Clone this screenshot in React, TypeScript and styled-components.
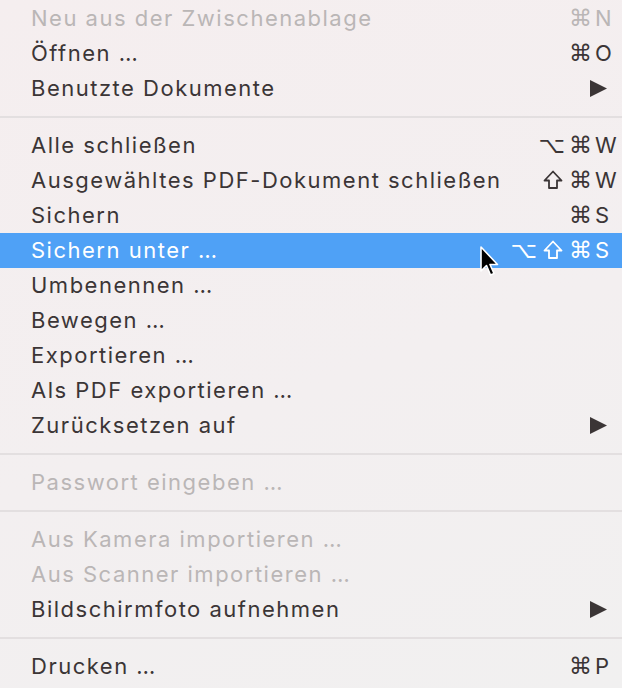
import React from "react";
import styled, { createGlobalStyle } from "styled-components";

const GlobalStyle = createGlobalStyle`
  html, body {
    margin: 0;
    padding: 0;
    background: #f3eeef;
  }
  * {
    box-sizing: border-box;
  }
`;

const Menu = styled.div`
  position: relative;
  width: 622px;
  height: 688px;
  overflow: hidden;
  padding-top: 0.5px;
  background: linear-gradient(160deg, #f5eeef 0%, #f3eff0 55%, #f1f0f0 100%);
  font-family: Inter, "Liberation Sans", sans-serif;
  font-size: 22px;
  letter-spacing: 1.5px;
  -webkit-font-smoothing: antialiased;
`;

const Row = styled.div<{ $disabled?: boolean; $active?: boolean }>`
  display: flex;
  align-items: center;
  height: 35px;
  padding-left: 31px;
  color: ${(p) => (p.$active ? "#ffffff" : p.$disabled ? "#bab6b6" : "#3b3536")};
  background: ${(p) => (p.$active ? "#4fa1f6" : "transparent")};
`;

const Label = styled.span`
  flex: 1;
  white-space: nowrap;
`;

const Shortcut = styled.span`
  display: flex;
  align-items: center;
`;

const Mods = styled.span`
  display: flex;
  align-items: center;
  gap: 4px;
  font-family: "DejaVu Sans", sans-serif;
  font-size: 23px;
  letter-spacing: 0;
`;

const Key = styled.span`
  width: 30px;
  padding-left: 3px;
  letter-spacing: 0;
`;

const ShiftIcon = styled.svg`
  display: block;
  margin: 0 2px;
`;

const ArrowBox = styled.span`
  display: flex;
  align-items: center;
  width: 32px;
`;

const Separator = styled.div`
  height: 22px;
  display: flex;
  align-items: center;
  &::after {
    content: "";
    display: block;
    width: 100%;
    height: 2px;
    background: #e3dfe0;
  }
`;

const Pointer = styled.svg`
  position: absolute;
  left: 479px;
  top: 245px;
`;

type Item = {
  label: string;
  mods?: string[];
  key?: string;
  submenu?: boolean;
  disabled?: boolean;
  active?: boolean;
};

const groups: Item[][] = [
  [
    { label: "Neu aus der Zwischenablage", mods: ["⌘"], key: "N", disabled: true },
    { label: "Öffnen …", mods: ["⌘"], key: "O" },
    { label: "Benutzte Dokumente", submenu: true },
  ],
  [
    { label: "Alle schließen", mods: ["⌥", "⌘"], key: "W" },
    { label: "Ausgewähltes PDF-Dokument schließen", mods: ["⇧", "⌘"], key: "W" },
    { label: "Sichern", mods: ["⌘"], key: "S" },
    { label: "Sichern unter …", mods: ["⌥", "⇧", "⌘"], key: "S", active: true },
    { label: "Umbenennen …" },
    { label: "Bewegen …" },
    { label: "Exportieren …" },
    { label: "Als PDF exportieren …" },
    { label: "Zurücksetzen auf", submenu: true },
  ],
  [{ label: "Passwort eingeben …", disabled: true }],
  [
    { label: "Aus Kamera importieren …", disabled: true },
    { label: "Aus Scanner importieren …", disabled: true },
    { label: "Bildschirmfoto aufnehmen", submenu: true },
  ],
  [{ label: "Drucken …", mods: ["⌘"], key: "P" }],
];

const Shift = () => (
  <ShiftIcon width="20" height="20" viewBox="0 0 20 20" aria-label="⇧">
    <path
      d="M10 1.5 L18.5 10.5 L14 10.5 L14 18 L6 18 L6 10.5 L1.5 10.5 Z"
      fill="none"
      stroke="currentColor"
      strokeWidth="1.8"
      strokeLinejoin="round"
    />
  </ShiftIcon>
);

const SubArrow = () => (
  <svg width="17" height="17" viewBox="0 0 17 17">
    <path d="M0 0 L17 8.5 L0 17 Z" fill="#3b3536" />
  </svg>
);

const MenuRow = ({ item }: { item: Item }) => (
  <Row $disabled={item.disabled} $active={item.active}>
    <Label>{item.label}</Label>
    {item.key && (
      <Shortcut>
        <Mods>
          {item.mods?.map((m) => (m === "⇧" ? <Shift key={m} /> : <span key={m}>{m}</span>))}
        </Mods>
        <Key>{item.key}</Key>
      </Shortcut>
    )}
    {item.submenu && (
      <ArrowBox>
        <SubArrow />
      </ArrowBox>
    )}
  </Row>
);

export default function App() {
  return (
    <>
      <GlobalStyle />
      <Menu>
        {groups.map((group, gi) => (
          <React.Fragment key={gi}>
            {gi > 0 && <Separator />}
            {group.map((item) => (
              <MenuRow key={item.label} item={item} />
            ))}
          </React.Fragment>
        ))}
        <Pointer width="24" height="34" viewBox="0 0 24 34">
          <path
            d="M2 2 L2 26 L7.5 20.5 L11.5 30 L15 28.5 L11 19.5 L18.5 19.5 Z"
            fill="#000"
            stroke="#fff"
            strokeWidth="1.6"
            strokeLinejoin="round"
          />
        </Pointer>
      </Menu>
    </>
  );
}
